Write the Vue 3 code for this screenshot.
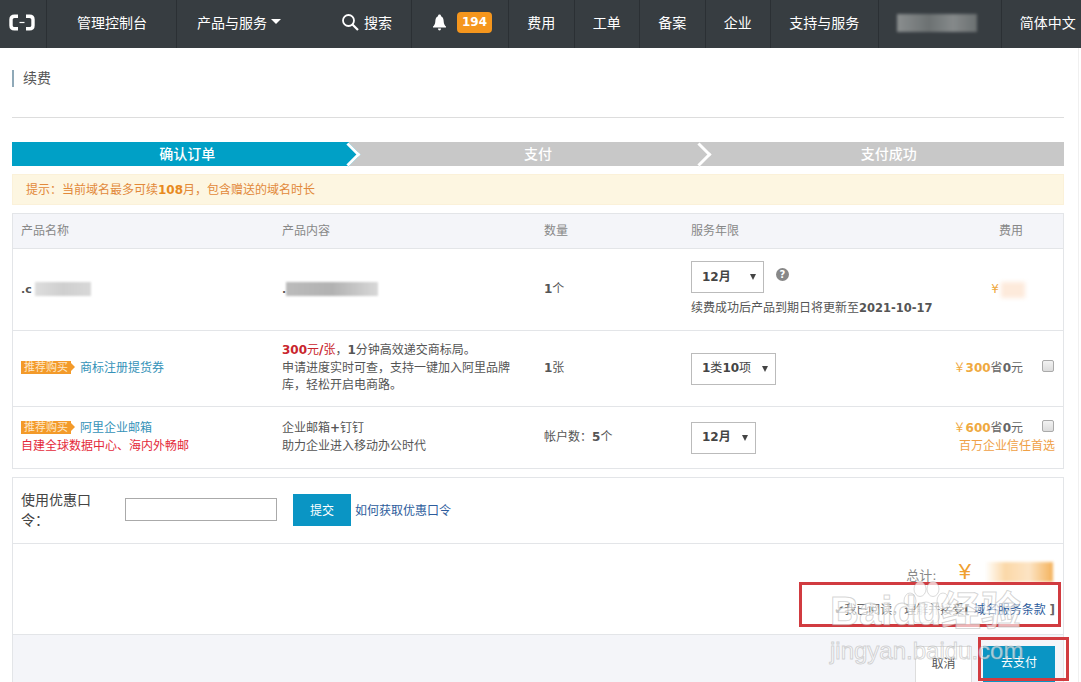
<template>
  <div class="page">
    <!-- Top nav -->
    <header class="topbar">
      <div class="nav-cell logo">
        <svg width="26" height="17" viewBox="0 0 26 17">
          <path d="M9 2.2H5.5Q2 2.2 2 5.5V11.5Q2 14.8 5.5 14.8H9M17 2.2H20.5Q24 2.2 24 5.5V11.5Q24 14.8 20.5 14.8H17" fill="none" stroke="#fff" stroke-width="3.4" />
          <rect x="10.5" y="7.9" width="5" height="1.2" fill="#fff" />
        </svg>
      </div>
      <div class="nav-cell console">管理控制台</div>
      <div class="nav-cell products">
        <span>产品与服务</span>
        <i class="caret"></i>
        <svg class="search-icon" width="18" height="18" viewBox="0 0 18 18">
          <circle cx="7.5" cy="7.5" r="5.5" fill="none" stroke="#fff" stroke-width="1.8" />
          <path d="M11.5 11.5L17 17" stroke="#fff" stroke-width="2.2" />
        </svg>
        <span class="search-text">搜索</span>
      </div>
      <div class="nav-cell notice-cell">
        <svg width="15" height="17" viewBox="0 0 15 17">
          <path d="M7.5 0.5C8.5 0.5 9 1.2 9 2.2C11 3 11.6 5 11.7 7.5C11.8 10 12.8 11.5 14 12.5V13.5H1V12.5C2.2 11.5 3.2 10 3.3 7.5C3.4 5 4 3 6 2.2C6 1.2 6.5 0.5 7.5 0.5Z" fill="#fff" />
          <path d="M6 14.5H9C9 15.6 8.4 16.5 7.5 16.5C6.6 16.5 6 15.6 6 14.5Z" fill="#fff" />
        </svg>
        <span class="badge">194</span>
      </div>
      <div v-for="item in navItems" :key="item" class="nav-cell">{{ item }}</div>
      <div class="nav-cell user"><span class="user-blur"></span></div>
      <div class="nav-cell">简体中文</div>
    </header>

    <main class="content">
      <div class="title-row">
        <span class="title">续费</span>
      </div>

      <!-- Steps -->
      <div class="steps">
        <div v-for="(step, i) in steps" :key="step" class="step" :class="{ active: i === 0, last: i === steps.length - 1 }">
          {{ step }}
        </div>
      </div>

      <div class="tip">提示：当前域名最多可续<b>108</b>月，包含赠送的域名时长</div>

      <table class="orders">
        <thead>
          <tr>
            <th class="col-name">产品名称</th>
            <th class="col-content">产品内容</th>
            <th class="col-qty">数量</th>
            <th class="col-term">服务年限</th>
            <th class="col-fee">费用</th>
          </tr>
        </thead>
        <tbody>
          <tr class="row-domain">
            <td><b class="domain">.c</b><span class="blur-text short"></span></td>
            <td><b class="domain">.</b><span class="blur-text long"></span></td>
            <td><b>1</b>个</td>
            <td>
              <div class="term-line">
                <div class="sel sel-month">12月<i class="sel-arrow"></i></div>
                <span class="help">?</span>
              </div>
              <div class="expire">续费成功后产品到期日将更新至<b>2021-10-17</b></div>
            </td>
            <td class="fee-cell">
              <div class="fee-line first"><span class="yen">¥</span><span class="blur-price"></span></div>
            </td>
          </tr>
          <tr class="row-trademark">
            <td>
              <span class="tag">推荐购买</span><a class="link">商标注册提货券</a>
            </td>
            <td>
              <div><b class="red">300</b><span class="red">元</span><b class="red">/</b><span class="red">张</span>，<b>1</b>分钟高效递交商标局。</div>
              <div>申请进度实时可查，支持一键加入阿里品牌库，轻松开启电商路。</div>
            </td>
            <td><b>1</b>张</td>
            <td><div class="sel sel-class"><span><b>1</b>类<b>10</b>项</span><i class="sel-arrow"></i></div></td>
            <td class="fee-cell">
              <div class="fee-line">
                <span><span class="yen">￥</span><b class="amount">300</b>省<b>0</b>元</span>
                <input type="checkbox" />
              </div>
            </td>
          </tr>
          <tr class="row-mail">
            <td>
              <div><span class="tag">推荐购买</span><a class="link">阿里企业邮箱</a></div>
              <div class="slogan">自建全球数据中心、海内外畅邮</div>
            </td>
            <td>
              <div>企业邮箱<b>+</b>钉钉</div>
              <div>助力企业进入移动办公时代</div>
            </td>
            <td>帐户数：<b>5</b>个</td>
            <td><div class="sel sel-mail">12月<i class="sel-arrow"></i></div></td>
            <td class="fee-cell">
              <div class="fee-line">
                <span><span class="yen">￥</span><b class="amount">600</b>省<b>0</b>元</span>
                <input type="checkbox" />
              </div>
              <div class="trust">百万企业信任首选</div>
            </td>
          </tr>
        </tbody>
      </table>

      <!-- Coupon, total, actions -->
      <section class="summary">
        <div class="coupon">
          <label class="coupon-label">使用优惠口令：</label>
          <input class="coupon-input" type="text" />
          <button class="submit">提交</button>
          <a class="how">如何获取优惠口令</a>
        </div>
        <div class="total">
          <div class="total-line">
            <span class="total-label">总计:</span>
            <span class="total-yen">¥</span>
            <span class="total-blur"></span>
          </div>
          <div class="agree">✔我已阅读，理解并接受<b>[</b> <a class="how">域名服务条款</a> <b>]</b></div>
        </div>
        <div class="actions">
          <button class="cancel">取消</button>
          <button class="pay">去支付</button>
        </div>
      </section>
    </main>

    <!-- Annotations on top of the screenshot -->
    <div class="mark mark-agree"></div>
    <div class="mark mark-pay"></div>
    <div class="watermark">
      <svg class="paw" width="48" height="46" viewBox="0 0 48 46">
        <g fill="#fff" fill-opacity="0.7" stroke="#999" stroke-opacity="0.35">
          <ellipse cx="8" cy="20" rx="6" ry="8" />
          <ellipse cx="18" cy="8" rx="6" ry="7.5" />
          <ellipse cx="31" cy="8" rx="6" ry="7.5" />
          <ellipse cx="41" cy="20" rx="6" ry="8" />
          <path d="M24 21C31 21 39 31 37 38C35 45 28 41 24 41C20 41 13 45 11 38C9 31 17 21 24 21Z" />
        </g>
      </svg>
      <div class="wm-brand">Baidu经验</div>
      <div class="wm-url">jingyan.baidu.com</div>
    </div>
  </div>
</template>

<script setup>
const navItems = ['费用', '工单', '备案', '企业', '支持与服务']
const steps = ['确认订单', '支付', '支付成功']
</script>

<style>
html,
body {
  margin: 0;
  background: #fff;
}
</style>

<style scoped>
.page {
  position: relative;
  width: 1081px;
  height: 682px;
  overflow: hidden;
  font-family: "DejaVu Sans", "Noto Sans CJK SC", sans-serif;
  font-size: 12px;
  color: #555;
}

.topbar {
  display: flex;
  height: 48px;
  background: #373d41;
  color: #fff;
  font-size: 14px;
}

.nav-cell {
  flex: none;
  display: flex;
  align-items: center;
  padding: 0 18.25px 5px;
  border-right: 1px solid #2b3034;
  white-space: nowrap;
}

.nav-cell:last-child {
  border-right: 0;
}

.logo {
  width: 47px;
  box-sizing: border-box;
  padding: 0 0 3px 9px;
}

.console {
  padding: 0 29px 5px 30px;
}

.products {
  padding: 0 19px 5px 20px;
}

.caret {
  margin-left: 4px;
  border-left: 5px solid transparent;
  border-right: 5px solid transparent;
  border-top: 5px solid #fff;
}

.search-icon {
  margin-left: 60px;
}

.search-text {
  margin-left: 5px;
}

.notice-cell {
  padding: 0 16px 3px 20px;
}

.badge {
  margin-left: 10px;
  width: 35px;
  height: 21px;
  line-height: 21px;
  border-radius: 4px;
  background: #f5961d;
  font-size: 12px;
  font-weight: bold;
  text-align: center;
}

.user {
  width: 123px;
  box-sizing: border-box;
  padding: 0 0 3px 18px;
}

.user-blur {
  width: 80px;
  height: 18px;
  background: linear-gradient(90deg, #8a8e8f, #6c7172 40%, #85898a 70%, #6b7071);
  filter: blur(1.5px);
}

.content {
  margin-right: 2px;
  padding: 0 14px 0 12px;
  border-right: 1px solid #f0f0f0;
}

.title-row {
  height: 47px;
  padding-top: 22px;
  border-bottom: 1px solid #ddd;
}

.title {
  display: block;
  height: 17px;
  line-height: 17px;
  padding-left: 9px;
  border-left: 2px solid #8fa9b8;
  font-size: 14px;
}

.steps {
  display: flex;
  margin-top: 24px;
  height: 24px;
  background: #c8c8c8;
}

.step {
  position: relative;
  flex: 1;
  line-height: 24px;
  text-align: center;
  font-size: 14px;
  color: #fff;
  font-weight: 500;
}

/* blue stops where the arrow head starts, the corners beside it stay grey */
.step.active {
  background: linear-gradient(#00a0c6, #00a0c6) no-repeat;
  background-size: calc(100% - 14px) 100%;
  z-index: 1;
}

.step::after {
  content: "";
  position: absolute;
  top: 3.5px;
  right: 5.5px;
  box-sizing: border-box;
  width: 17px;
  height: 17px;
  background: #c8c8c8;
  border-top: 3px solid #fff;
  border-right: 3px solid #fff;
  transform: rotate(45deg);
}

.step.active::after {
  background: #00a0c6;
}

.step.last::after {
  display: none;
}

.tip {
  margin-top: 8px;
  height: 31px;
  line-height: 30px;
  box-sizing: border-box;
  padding-left: 13px;
  background: #fdf6e1;
  border: 1px solid #fbf1d9;
  color: #e2893a;
}

.tip b {
  color: #e88a1e;
}

.orders {
  width: 100%;
  margin-top: 8px;
  table-layout: fixed;
  border-collapse: collapse;
  border: 1px solid #e3e5e8;
}

.orders th {
  height: 31px;
  padding: 0 8px 3px;
  background: #f4f5f9;
  font-weight: normal;
  text-align: left;
  color: #888;
  border-bottom: 1px solid #e3e5e8;
}

.col-name {
  width: 245px;
}

.col-content {
  width: 246px;
}

.col-qty {
  width: 131px;
}

.col-term {
  width: 235px;
}

.orders th.col-fee {
  padding-right: 40px;
  text-align: right;
}

.orders td {
  padding: 0 8px;
  line-height: 17.5px;
  border-bottom: 1px solid #e3e5e8;
}

.row-domain td {
  height: 81px;
}

.row-trademark td {
  height: 75px;
}

.row-mail td {
  height: 61px;
}

.domain {
  font-size: 11px;
}

.blur-text {
  display: inline-block;
  height: 14px;
  vertical-align: middle;
  background: linear-gradient(90deg, #ddd, #cfcfcf 50%, #d8d8d8);
  filter: blur(1px);
}

.blur-text.short {
  width: 56px;
  margin-left: 3px;
}

.blur-text.long {
  width: 92px;
  background: linear-gradient(90deg, #bbb, #b2b2b2 50%, #d8d8d8);
}

.term-line {
  display: flex;
  align-items: flex-start;
}

.sel {
  display: flex;
  align-items: center;
  justify-content: space-between;
  box-sizing: border-box;
  height: 32px;
  padding: 0 7px 0 10px;
  border: 1px solid #bbb;
  font-weight: bold;
  color: #444;
  background: #fff;
}

.sel span {
  font-weight: normal;
}

.sel-month {
  width: 73px;
}

.sel-class {
  width: 85px;
}

.sel-mail {
  width: 65px;
}

.sel-arrow {
  border-left: 3.5px solid transparent;
  border-right: 3.5px solid transparent;
  border-top: 6px solid #444;
}

.help {
  width: 13px;
  height: 13px;
  margin: 7px 0 0 12px;
  border-radius: 50%;
  background: #888;
  color: #fff;
  font-size: 10px;
  font-weight: bold;
  line-height: 13px;
  text-align: center;
}

.expire {
  margin-top: 7px;
  white-space: nowrap;
}

.expire b {
  font-size: 11.5px;
}

.fee-cell {
  color: #666;
}

.fee-line {
  display: flex;
  justify-content: flex-end;
  align-items: center;
}

.fee-line.first {
  padding-right: 30px;
}

.fee-line input {
  appearance: none;
  box-sizing: border-box;
  width: 12px;
  height: 12px;
  margin: 0 1px 5px 19px;
  border: 1px solid #aaa;
  border-radius: 2px;
  background: linear-gradient(#f2f2f2, #dcdcdc);
}

.yen,
.amount {
  color: #efa93f;
}

.blur-price {
  width: 24px;
  height: 16px;
  margin-left: 2px;
  background: #fdeadb;
  filter: blur(2px);
}

.trust {
  color: #efa045;
  text-align: right;
}

.tag {
  position: relative;
  display: inline-block;
  width: 50px;
  height: 13px;
  margin-right: 9px;
  background: #f39a2a;
  color: #fde7c8;
  font-size: 11px;
  line-height: 13px;
  text-align: center;
  vertical-align: 1px;
}

.tag::after {
  content: "";
  position: absolute;
  top: 2px;
  right: -4px;
  border-top: 4.5px solid transparent;
  border-bottom: 4.5px solid transparent;
  border-left: 4px solid #f39a2a;
}

.link {
  color: #3592b8;
}

.slogan {
  color: #e4293a;
}

.red {
  color: #c9252d;
}

.summary {
  margin-top: 8px;
  height: 205px;
  border: 1px solid #e3e5e8;
  border-bottom: 0;
}

.coupon {
  display: flex;
  align-items: center;
  box-sizing: border-box;
  height: 66px;
  padding: 0 0 2px 8px;
  border-bottom: 1px solid #e3e5e8;
}

.coupon-label {
  width: 84px;
  margin-right: 20px;
  flex: none;
  font-size: 14px;
  line-height: 20px;
  color: #444;
}

.coupon-input {
  box-sizing: border-box;
  width: 152px;
  height: 23px;
  border: 1px solid #aaa;
  background: #fff;
}

.submit {
  width: 58px;
  height: 32px;
  margin: 0 4px 0 16px;
  padding: 0;
  border: 0;
  background: #0a95c4;
  color: #fff;
  font: inherit;
}

.how {
  color: #2d5c9c;
}

.total {
  height: 90px;
  padding-right: 8px;
  text-align: right;
}

.total-line {
  display: flex;
  justify-content: flex-end;
  align-items: center;
  height: 56px;
}

.total-label {
  margin: 4px 22px 0 0;
  font-size: 13px;
  color: #888;
}

.total-yen {
  font-size: 22px;
  color: #f0a030;
  margin-right: 14px;
  font-family: "Liberation Sans", sans-serif;
}

.total-blur {
  width: 68px;
  height: 20px;
  margin-right: 2px;
  background: linear-gradient(90deg, #fff, #fbd8a8 30%, #fce4c4 65%, #f4b25c);
  filter: blur(1.5px);
}

.agree {
  color: #666;
  white-space: nowrap;
}

.actions {
  display: flex;
  justify-content: flex-end;
  align-items: flex-end;
  height: 48px;
  padding-right: 8px;
  background: #f4f5f9;
  border-top: 1px solid #e3e5e8;
  box-sizing: border-box;
}

.cancel,
.pay {
  height: 36px;
  padding: 0 0 5px;
  font: inherit;
  border-radius: 0;
}

.cancel {
  width: 57px;
  margin-right: 11px;
  background: #fff;
  border: 1px solid #ddd;
  border-bottom: 0;
  color: #555;
}

.pay {
  width: 72px;
  border: 0;
  background: #0a95c4;
  color: #fff;
}

.mark {
  position: absolute;
  box-sizing: border-box;
  border: 3px solid #d13b40;
}

.mark-agree {
  left: 799px;
  top: 582px;
  width: 262px;
  height: 45px;
}

.mark-pay {
  left: 978px;
  top: 637px;
  width: 91px;
  height: 44px;
}

.watermark {
  position: absolute;
  left: 830px;
  top: 583px;
  width: 200px;
  pointer-events: none;
}

.paw {
  position: absolute;
  left: 72px;
  top: -2px;
}

.wm-brand,
.wm-url {
  position: absolute;
  left: 0;
  font-family: "Liberation Sans", "Noto Sans CJK SC", sans-serif;
  white-space: nowrap;
  color: rgba(255, 255, 255, 0.65);
  -webkit-text-stroke: 1px rgba(150, 150, 150, 0.4);
}

.wm-brand {
  top: 6px;
  font-size: 40px;
  line-height: 44px;
  font-weight: bold;
}

.wm-url {
  top: 54px;
  font-size: 24px;
  line-height: 28px;
}
</style>
